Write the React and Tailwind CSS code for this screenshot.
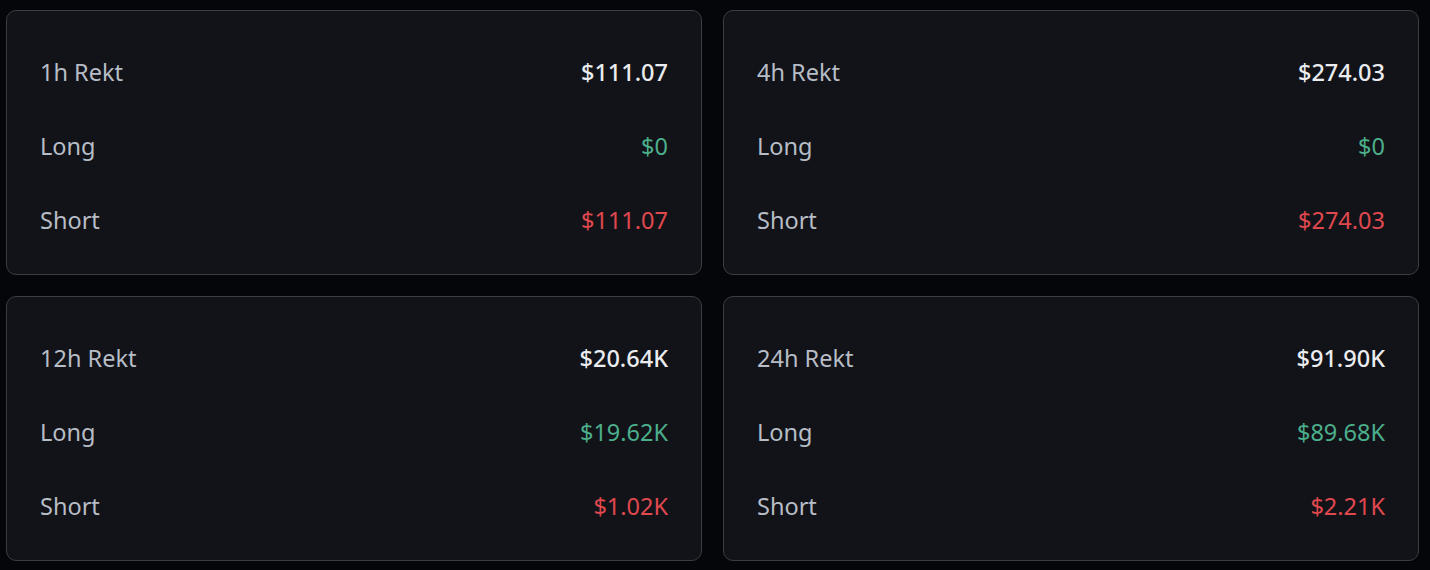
import React from 'react';

const stats = [
  { title: '1h Rekt', total: '$111.07', long: '$0', short: '$111.07' },
  { title: '4h Rekt', total: '$274.03', long: '$0', short: '$274.03' },
  { title: '12h Rekt', total: '$20.64K', long: '$19.62K', short: '$1.02K' },
  { title: '24h Rekt', total: '$91.90K', long: '$89.68K', short: '$2.21K' },
];

function Row({ label, value, valueClass }) {
  return (
    <div className="flex h-[74px] items-center justify-between">
      <span className="text-[#b7bdc6]">{label}</span>
      <span className={valueClass}>{value}</span>
    </div>
  );
}

function RektCard({ title, total, long, short }) {
  return (
    <div className="rounded-[10px] border border-[#3a3d44] bg-[#121318] px-[33px] pt-[25px] pb-[16px]">
      <Row label={title} value={total} valueClass="font-medium text-[#eaecef]" />
      <Row label="Long" value={long} valueClass="text-[#4caf8c]" />
      <Row label="Short" value={short} valueClass="text-[#e0484f]" />
    </div>
  );
}

export default function App() {
  return (
    <div
      className="min-h-[570px] w-[1430px] bg-[#05060a] pt-[10px] pl-[6px] pr-[10px] text-[23.5px]"
      style={{ fontFamily: '"Noto Sans", "Open Sans", sans-serif' }}
    >
      <div className="grid grid-cols-[696px_696px] gap-x-[21px] gap-y-[21px]">
        {stats.map((s) => (
          <RektCard key={s.title} {...s} />
        ))}
      </div>
    </div>
  );
}
